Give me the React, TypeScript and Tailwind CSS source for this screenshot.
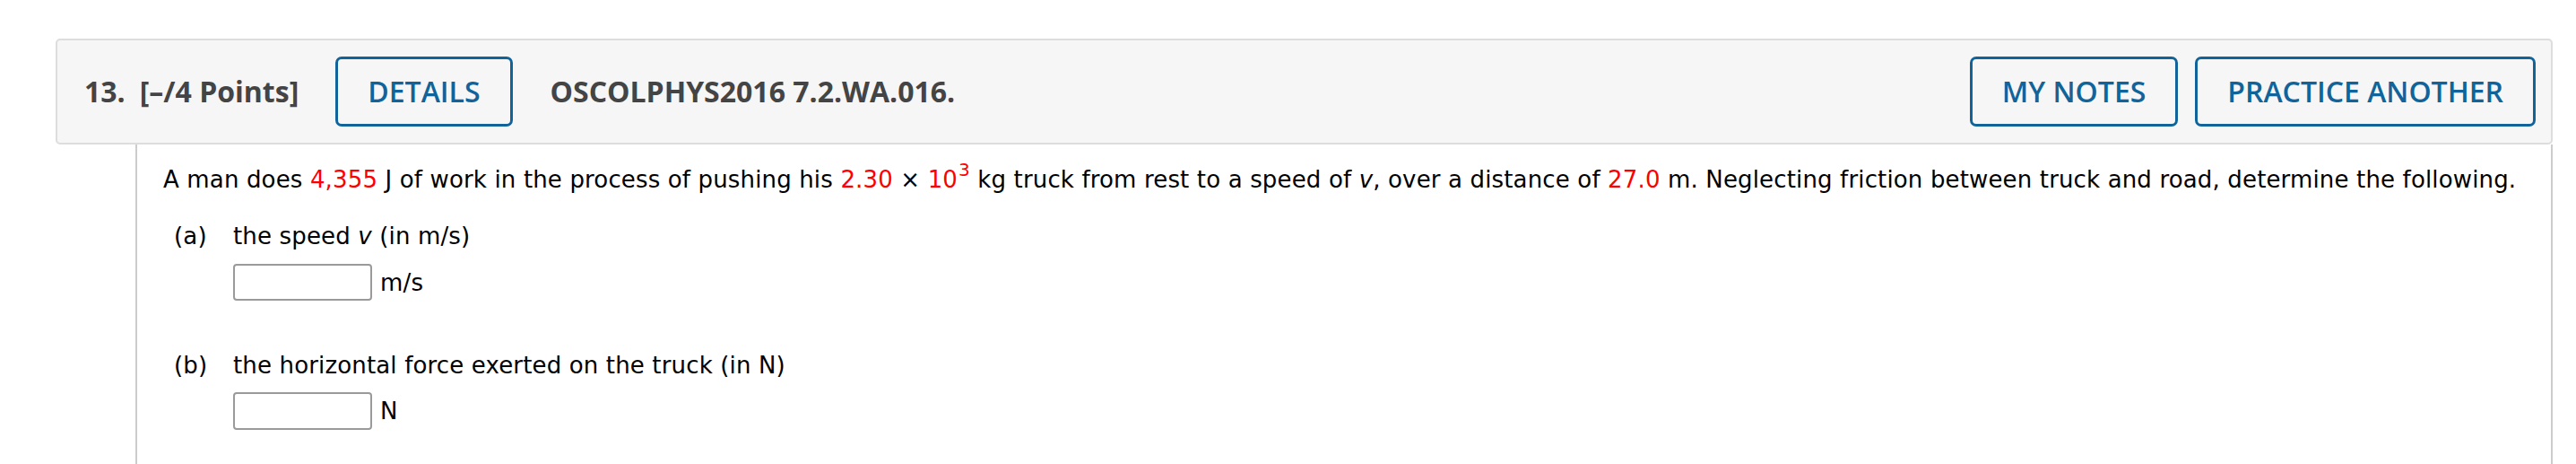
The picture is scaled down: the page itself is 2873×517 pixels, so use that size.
import React from "react";

const red = "text-[#ff0000]";

export default function App() {
  return (
    <div className="w-[2873px] h-[517px] bg-white pt-[43px] pl-[62px] pr-[26px] overflow-hidden">
      {/* Header */}
      <div className="h-[118px] border-2 border-[#dddddd] rounded-[5px] bg-[#f6f6f6] flex items-center pl-[30px] pr-[17px] font-['Open_Sans',sans-serif] text-[32px]">
        <div className="font-bold text-[#444444] flex">
          <span>13.</span>
          <span className="ml-[16px]">[–/4 Points]</span>
        </div>
        <button className="ml-[41px] h-[78px] px-[33px] border-[3px] border-[#10649a] rounded-[7px] text-[#10649a] font-semibold bg-transparent">
          DETAILS
        </button>
        <div className="ml-[42px] font-bold text-[#444444]">OSCOLPHYS2016 7.2.WA.016.</div>
        <div className="ml-auto flex gap-[19px]">
          <button className="h-[78px] px-[33px] border-[3px] border-[#10649a] rounded-[7px] text-[#10649a] font-semibold bg-transparent">
            MY NOTES
          </button>
          <button className="h-[78px] px-[33px] border-[3px] border-[#10649a] rounded-[7px] text-[#10649a] font-semibold bg-transparent">
            PRACTICE ANOTHER
          </button>
        </div>
      </div>

      {/* Body */}
      <div className="ml-[89px] h-[400px] border-l-2 border-r-2 border-[#cccccc] pl-[29px] pt-[21px] font-['DejaVu_Sans',Verdana,sans-serif] text-[26px] tracking-[0.15px] text-black">
        <p className="leading-[36px] whitespace-nowrap">
          A man does <span className={red}>4,355</span> J of work in the process of pushing his{" "}
          <span className={red}>2.30</span> × <span className={red}>10</span>
          <sup className={`${red} text-[20px] relative -top-[13px] ml-[1px]`}>3</sup> kg truck from rest to a speed of{" "}
          <i>v</i>, over a distance of <span className={red}>27.0</span> m. Neglecting friction between truck and road,
          determine the following.
        </p>

        <div className="mt-[27px] pl-[12px]">
          <div className="flex leading-[36px]">
            <span className="w-[66px]">(a)</span>
            <span>
              the speed <i>v</i> (in m/s)
            </span>
          </div>
          <div className="mt-[13px] ml-[66px] flex items-center gap-[9px]">
            <div className="w-[155px] h-[41px] border-2 border-[#9a9a9a] rounded-[4px] bg-white" />
            <span className="leading-[36px]">m/s</span>
          </div>

          <div className="mt-[54px] flex leading-[36px]">
            <span className="w-[66px]">(b)</span>
            <span>the horizontal force exerted on the truck (in N)</span>
          </div>
          <div className="mt-[12px] ml-[66px] flex items-center gap-[9px]">
            <div className="w-[155px] h-[42px] border-2 border-[#9a9a9a] rounded-[4px] bg-white" />
            <span className="leading-[36px]">N</span>
          </div>
        </div>
      </div>
    </div>
  );
}
